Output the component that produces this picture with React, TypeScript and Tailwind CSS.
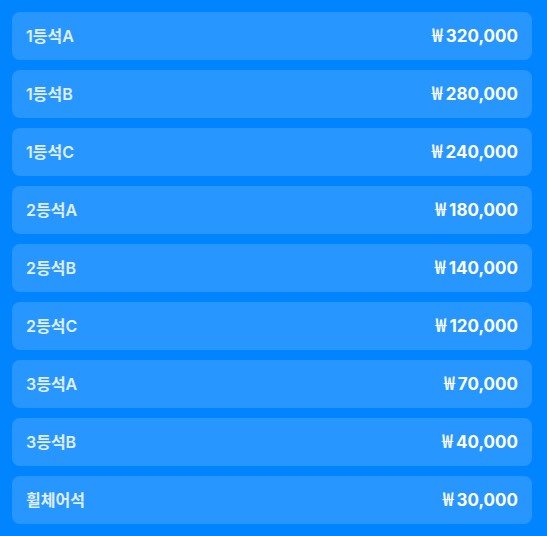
import React from "react";

const rows: [string, string][] = [
  ["1등석A", "320,000"],
  ["1등석B", "280,000"],
  ["1등석C", "240,000"],
  ["2등석A", "180,000"],
  ["2등석B", "140,000"],
  ["2등석C", "120,000"],
  ["3등석A", "70,000"],
  ["3등석B", "40,000"],
  ["휠체어석", "30,000"],
];

export default function App() {
  return (
    <div
      className="w-[547px] h-[536px] bg-[#0084ff] pt-[12px] pl-[12px] pr-[15px] flex flex-col gap-[10px]"
      style={{ fontFamily: 'Inter, "Noto Sans CJK KR", sans-serif' }}
    >
      {rows.map(([label, price]) => (
        <div
          key={label}
          className="h-[48px] shrink-0 rounded-[8px] bg-[#2896ff] px-[14px] flex items-center justify-between"
        >
          <span className="text-[16px] leading-[24px] font-semibold text-white/85">{label}</span>
          <span className="text-[17px] leading-[24px] font-bold text-white whitespace-nowrap">
            <span
              className="font-medium text-[19px] leading-[0px] mr-[3px]"
              style={{ fontFamily: '"Noto Sans CJK KR", sans-serif' }}
            >
              ₩
            </span>
            {price}
          </span>
        </div>
      ))}
    </div>
  );
}
